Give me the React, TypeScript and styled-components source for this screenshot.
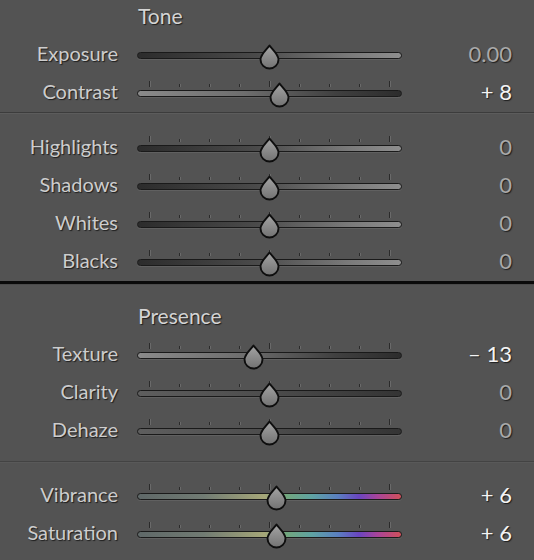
import styled, { createGlobalStyle } from "styled-components";

const GlobalStyle = createGlobalStyle`
  html, body {
    margin: 0;
    padding: 0;
    background: #535353;
  }
  body {
    font-family: Lato, "Open Sans", sans-serif;
  }
`;

type Row = {
  label: string;
  value: number;
  text: string;
  track: string;
  ticks?: boolean;
};

const DARK_LIGHT = "linear-gradient(90deg, #2c2c2c 0%, #4a4a4a 45%, #7a7a7a 80%, #8e8e8e 100%)";
const LIGHT_DARK = "linear-gradient(90deg, #8a8a8a 0%, #6e6e6e 40%, #404040 75%, #2c2c2c 100%)";
const SOFT_DARK = "linear-gradient(90deg, #5e5e5e 0%, #4c4c4c 50%, #343434 100%)";
const COLOR =
  "linear-gradient(90deg, #5f6868 0%, #717b73 25%, #a6a779 48%, #73a67c 56%, #5fa3a2 66%, #5a7fc0 76%, #6a45c0 84%, #a8449a 91%, #d0505a 100%)";

const tone: Row[] = [
  { label: "Exposure", value: 0, text: "0.00", track: DARK_LIGHT, ticks: false },
  { label: "Contrast", value: 8, text: "+ 8", track: LIGHT_DARK },
];

const toneDetail: Row[] = [
  { label: "Highlights", value: 0, text: "0", track: DARK_LIGHT },
  { label: "Shadows", value: 0, text: "0", track: DARK_LIGHT },
  { label: "Whites", value: 0, text: "0", track: DARK_LIGHT },
  { label: "Blacks", value: 0, text: "0", track: DARK_LIGHT },
];

const presence: Row[] = [
  { label: "Texture", value: -13, text: "\u2013 13", track: LIGHT_DARK },
  { label: "Clarity", value: 0, text: "0", track: SOFT_DARK },
  { label: "Dehaze", value: 0, text: "0", track: SOFT_DARK },
];

const color: Row[] = [
  { label: "Vibrance", value: 6, text: "+ 6", track: COLOR },
  { label: "Saturation", value: 6, text: "+ 6", track: COLOR },
];

const Panel = styled.div`
  width: 534px;
  height: 560px;
  background: #535353;
  overflow: hidden;
  display: flex;
  flex-direction: column;
`;

const Section = styled.div<{ $top: number; $bottom: number }>`
  display: flex;
  flex-direction: column;
  padding-top: ${(p) => p.$top}px;
  padding-bottom: ${(p) => p.$bottom}px;
`;

const Title = styled.div<{ $gap: number }>`
  height: 24px;
  line-height: 24px;
  padding-left: 138px;
  margin-bottom: ${(p) => p.$gap}px;
  font-size: 21px;
  color: #d4d4d4;
  text-shadow: 1px 1px 1px #1e1e1e;
`;

const RowLine = styled.div`
  height: 38px;
  display: grid;
  grid-template-columns: 118px 265px 91px;
  column-gap: 19px;
  align-items: center;
`;

const Label = styled.div`
  text-align: right;
  font-size: 20px;
  color: #cdcdcd;
  text-shadow: 1px 1px 1px #1e1e1e;
  margin-top: -4px;
`;

const Value = styled.div<{ $active: boolean }>`
  text-align: right;
  font-size: 22px;
  margin-top: -4px;
  color: ${(p) => (p.$active ? "#f4f4f4" : "#a9a9a9")};
  text-shadow: 1px 1px 1px #1e1e1e;
`;

const Slider = styled.div`
  position: relative;
  height: 38px;
  display: flex;
  flex-direction: column;
  justify-content: center;
`;

const Ticks = styled.div`
  position: absolute;
  left: 12px;
  right: 12px;
  top: 6px;
  height: 7px;
  display: flex;
  justify-content: space-between;
  align-items: flex-end;
`;

const Tick = styled.span<{ $long: boolean }>`
  width: 1px;
  height: ${(p) => (p.$long ? 6 : 3)}px;
  background: #2a2a2a;
  box-shadow: 1px 0 0 #6a6a6a;
`;

const Track = styled.div<{ $fill: string }>`
  height: 5px;
  border: 1.5px solid #1a1a1a;
  border-radius: 5px;
  background: ${(p) => p.$fill};
  box-shadow: 0 1px 0 #606060;
`;

const Thumb = styled.svg`
  position: absolute;
  top: 8px;
  width: 21px;
  height: 25px;
  margin-left: -10.5px;
  overflow: visible;
`;

const Separator = styled.div<{ $dark: string; $light: string; $size: number }>`
  height: ${(p) => p.$size}px;
  background: ${(p) => p.$dark};
  border-bottom: 1px solid ${(p) => p.$light};
`;

function Knob({ value }: { value: number }) {
  const left = 132.5 + value * 1.195;
  return (
    <Thumb viewBox="0 0 21 25" style={{ left }}>
      <defs>
        <linearGradient id="knob" x1="0" y1="0" x2="0" y2="1">
          <stop offset="0" stopColor="#a4a4a4" />
          <stop offset="1" stopColor="#727272" />
        </linearGradient>
      </defs>
      <path
        d="M10.5 1.5 C13.5 5.5 19.5 10.5 19.5 15.5 A9 9 0 0 1 1.5 15.5 C1.5 10.5 7.5 5.5 10.5 1.5 Z"
        fill="url(#knob)"
        stroke="#0e0e0e"
        strokeWidth="1.9"
        strokeLinejoin="round"
      />
    </Thumb>
  );
}

function SliderRow({ row }: { row: Row }) {
  return (
    <RowLine>
      <Label>{row.label}</Label>
      <Slider>
        {row.ticks !== false && (
          <Ticks>
            {Array.from({ length: 9 }, (_, i) => (
              <Tick key={i} $long={i === 0 || i === 4 || i === 8} />
            ))}
          </Ticks>
        )}
        <Track $fill={row.track} />
        <Knob value={row.value} />
      </Slider>
      <Value $active={row.value !== 0}>{row.text}</Value>
    </RowLine>
  );
}

export default function App() {
  return (
    <Panel>
      <GlobalStyle />
      <Section $top={4} $bottom={0}>
        <Title $gap={8}>Tone</Title>
        {tone.map((r) => (
          <SliderRow key={r.label} row={r} />
        ))}
      </Section>
      <Separator $dark="#3c3c3c" $light="#5c5c5c" $size={1} />
      <Section $top={15} $bottom={0}>
        {toneDetail.map((r) => (
          <SliderRow key={r.label} row={r} />
        ))}
      </Section>
      <Separator $dark="#0a0a0a" $light="#4a4a4a" $size={3} />
      <Section $top={19} $bottom={11}>
        <Title $gap={8}>Presence</Title>
        {presence.map((r) => (
          <SliderRow key={r.label} row={r} />
        ))}
      </Section>
      <Separator $dark="#434343" $light="#595959" $size={1} />
      <Section $top={14} $bottom={0}>
        {color.map((r) => (
          <SliderRow key={r.label} row={r} />
        ))}
      </Section>
    </Panel>
  );
}
